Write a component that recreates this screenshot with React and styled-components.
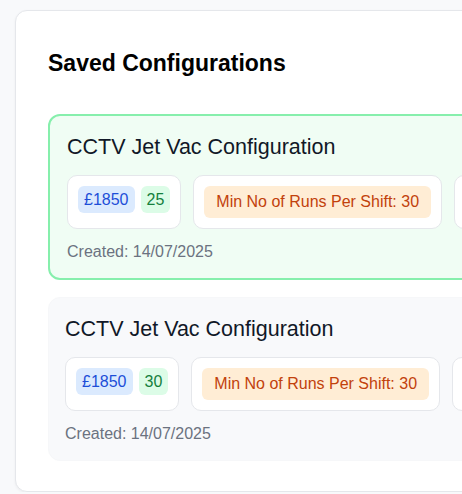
import React from "react";
import styled, { createGlobalStyle } from "styled-components";

const Global = createGlobalStyle`
  html, body { margin: 0; padding: 0; overflow: hidden; }
  body {
    background: #f8f9fb;
    font-family: "Liberation Sans", Arial, sans-serif;
  }
  #root { padding: 10px 0 0 15px; }
`;

const Panel = styled.section`
  width: 900px;
  box-sizing: border-box;
  background: #ffffff;
  border: 1px solid #e5e7eb;
  border-radius: 12px;
  box-shadow: 0 1px 3px rgba(0, 0, 0, 0.05);
  padding: 32px 32px 30px 32px;
`;

const Heading = styled.h2`
  margin: 6px 0 37px 0;
  font-size: 23px;
  line-height: 28px;
  font-weight: 700;
  color: #000000;
`;

const List = styled.div`
  display: flex;
  flex-direction: column;
  gap: 17px;
`;

const Card = styled.div`
  border-radius: 12px;
  padding: ${(p) => (p.$selected ? "17px 17px 16px 17px" : "17px 16px 16px 16px")};
  background: ${(p) => (p.$selected ? "#f0fdf4" : "#f8f9fb")};
  border: ${(p) => (p.$selected ? "2px solid #86efac" : "1px solid #f6f7f9")};
`;

const Title = styled.h3`
  margin: 0 0 14px 0;
  font-size: 21.5px;
  line-height: 28px;
  font-weight: 400;
  color: #111827;
`;

const Row = styled.div`
  display: flex;
  gap: 12px;
`;

const Box = styled.div`
  display: flex;
  align-items: flex-start;
  gap: 6px;
  flex-shrink: 0;
  background: #ffffff;
  border: 1px solid #e5e7eb;
  border-radius: 10px;
  padding: 10px;
`;

const tones = {
  blue: { bg: "#dbeafe", fg: "#1d4ed8" },
  green: { bg: "#dcfce7", fg: "#15803d" },
  orange: { bg: "#ffedd5", fg: "#c2410c" },
  purple: { bg: "#f3e8ff", fg: "#7e22ce" },
};

const Badge = styled.span`
  display: inline-block;
  font-size: 16px;
  white-space: nowrap;
  border-radius: 6px;
  background: ${(p) => tones[p.$tone].bg};
  color: ${(p) => tones[p.$tone].fg};
  padding: ${(p) => (p.$large ? "4px 12px" : "2px 6px")};
  line-height: ${(p) => (p.$large ? "24px" : "23px")};
`;

const Created = styled.div`
  margin-top: 13px;
  font-size: 16px;
  line-height: 20px;
  color: #6b7280;
`;

const configs = [
  { name: "CCTV Jet Vac Configuration", price: "£1850", qty: "25", runs: 30, date: "14/07/2025", selected: true },
  { name: "CCTV Jet Vac Configuration", price: "£1850", qty: "30", runs: 30, date: "14/07/2025", selected: false },
];

export default function App() {
  return (
    <>
      <Global />
      <Panel>
        <Heading>Saved Configurations</Heading>
        <List>
          {configs.map((c, i) => (
            <Card key={i} $selected={c.selected}>
              <Title>{c.name}</Title>
              <Row>
                <Box>
                  <Badge $tone="blue">{c.price}</Badge>
                  <Badge $tone="green">{c.qty}</Badge>
                </Box>
                <Box>
                  <Badge $tone="orange" $large>Min No of Runs Per Shift: {c.runs}</Badge>
                </Box>
                <Box>
                  <Badge $tone="purple" $large>Max Shift Hours: 10</Badge>
                </Box>
              </Row>
              <Created>Created: {c.date}</Created>
            </Card>
          ))}
        </List>
      </Panel>
    </>
  );
}
